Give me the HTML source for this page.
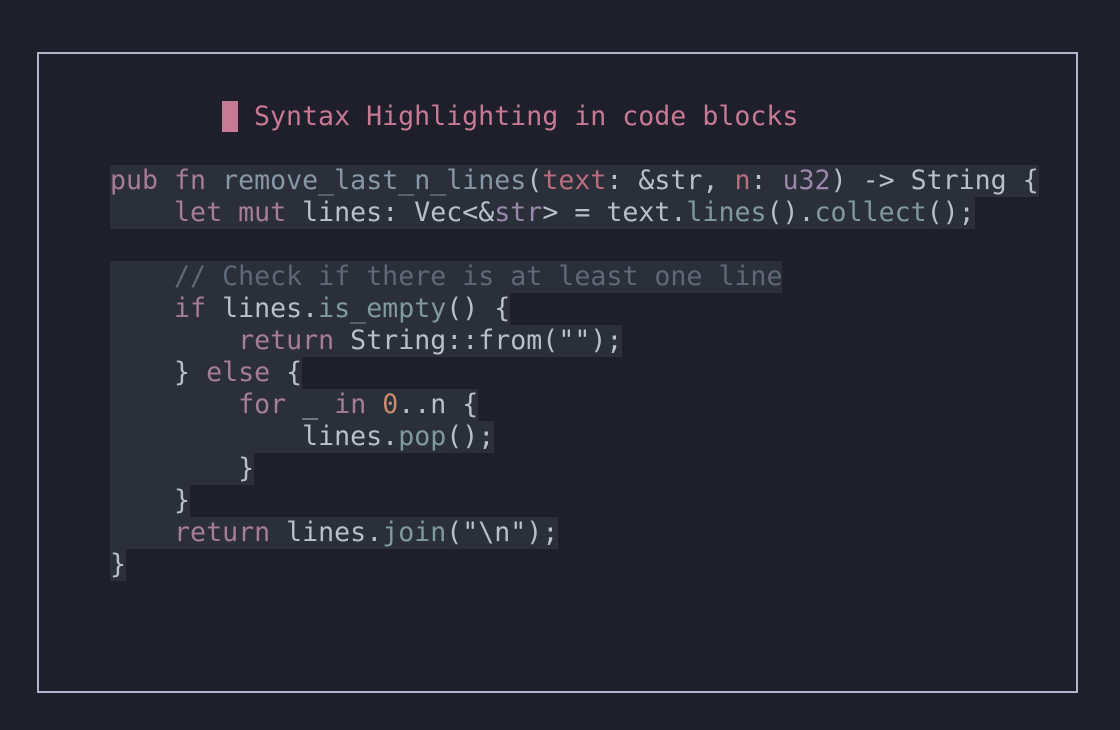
<!DOCTYPE html>
<html><head><style>
html,body{margin:0;padding:0;background:#1f1e2b;width:1120px;height:730px;overflow:hidden}
.box{position:absolute;left:37px;top:52px;width:1037px;height:637px;border:2px solid #b2b4cc}
.mono{font-family:"DejaVu Sans Mono","Liberation Mono",monospace;font-size:26.6px;line-height:32px}
.title{position:absolute;left:222px;top:101px;color:#c67a93;white-space:pre}
.cur{display:inline-block;width:16px;height:31px;background:#c67a93;vertical-align:top}
.code{position:absolute;left:110px;top:165px;color:#b9bfca}
.l{height:32px;white-space:pre}
.l span.b{background:#2b2f3a;display:inline-block;height:32px}
.k{color:#a67d98}.f{color:#8797a6}.p{color:#b86e7c}.t{color:#9a87aa}.m{color:#7f9a9e}.n{color:#c88a6c}.c{color:#5f6877}
</style></head><body>
<div class="box"></div>
<div class="mono title"><span class="cur"></span> Syntax Highlighting in code blocks</div>
<div class="mono code">
<div class="l"><span class="b"><span class="k">pub fn</span> <span class="f">remove_last_n_lines</span>(<span class="p">text</span>: &amp;str, <span class="p">n</span>: <span class="t">u32</span>) -&gt; String {</span></div>
<div class="l"><span class="b">    <span class="k">let mut</span> lines: Vec&lt;&amp;<span class="t">str</span>&gt; = text.<span class="m">lines</span>().<span class="m">collect</span>();</span></div>
<div class="l"></div>
<div class="l"><span class="b">    <span class="c">// Check if there is at least one line</span></span></div>
<div class="l"><span class="b">    <span class="k">if</span> lines.<span class="m">is_empty</span>() {</span></div>
<div class="l"><span class="b">        <span class="k">return</span> String::from("");</span></div>
<div class="l"><span class="b">    } <span class="k">else</span> {</span></div>
<div class="l"><span class="b">        <span class="k">for</span> _ <span class="k">in</span> <span class="n">0</span>..n {</span></div>
<div class="l"><span class="b">            lines.<span class="m">pop</span>();</span></div>
<div class="l"><span class="b">        }</span></div>
<div class="l"><span class="b">    }</span></div>
<div class="l"><span class="b">    <span class="k">return</span> lines.<span class="m">join</span>("\n");</span></div>
<div class="l"><span class="b">}</span></div>
</div>
</body></html>
